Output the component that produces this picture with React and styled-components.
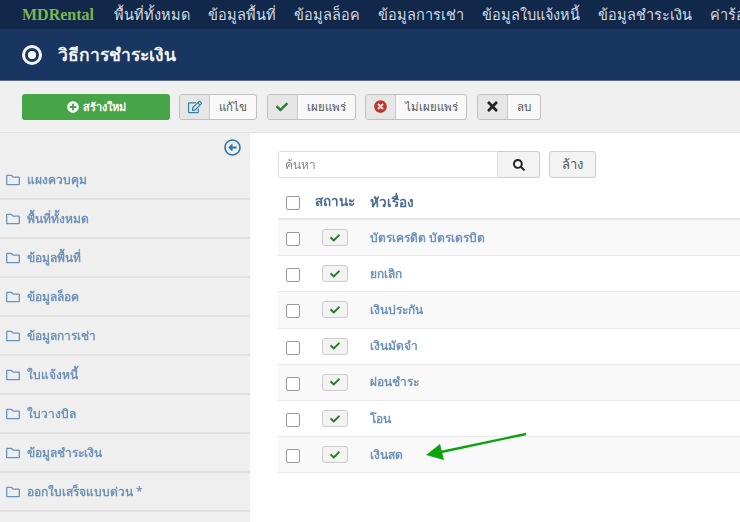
import React from "react";
import styled, { createGlobalStyle } from "styled-components";
import { FaCheck, FaTimes, FaTimesCircle, FaSearch, FaPlusCircle, FaRegEdit, FaRegFolder, FaRegArrowAltCircleLeft } from "react-icons/fa";

const GlobalStyle = createGlobalStyle`
  html, body {
    margin: 0;
    padding: 0;
    background: #fff;
    overflow: hidden;
  }
  body {
    font-family: "Noto Sans", "Open Sans", "Liberation Sans", sans-serif;
  }
`;

const navItems = ["พื้นที่ทั้งหมด", "ข้อมูลพื้นที่", "ข้อมูลล็อค", "ข้อมูลการเช่า", "ข้อมูลใบแจ้งหนี้", "ข้อมูลชำระเงิน", "ค่าร้อง"];
const sideItems = ["แผงควบคุม", "พื้นที่ทั้งหมด", "ข้อมูลพื้นที่", "ข้อมูลล็อค", "ข้อมูลการเช่า", "ใบแจ้งหนี้", "ใบวางบิล", "ข้อมูลชำระเงิน", "ออกใบเสร็จแบบด่วน *"];
const rows = ["บัตรเครดิต บัตรเดรบิต", "ยกเลิก", "เงินประกัน", "เงินมัดจำ", "ผ่อนชำระ", "โอน", "เงินสด"];

const App = () => {
  return (
    <Page>
      <GlobalStyle />
      <NavBar>
        <Brand>MDRental</Brand>
        {navItems.map(item => <NavItem key={item}>{item}</NavItem>)}
      </NavBar>
      <TitleBar>
        <TitleRing />
        <Title>วิธีการชำระเงิน</Title>
      </TitleBar>
      <Toolbar>
        <NewButton><FaPlusCircle size={12} /> สร้างใหม่</NewButton>
        <ToolButton $width={78}><ToolIcon $color="#2f7f9e"><FaRegEdit size={14} /></ToolIcon><ToolLabel>แก้ไข</ToolLabel></ToolButton>
        <ToolButton $width={89}><ToolIcon $color="#2f7a33"><FaCheck size={12} /></ToolIcon><ToolLabel>เผยแพร่</ToolLabel></ToolButton>
        <ToolButton $width={102}><ToolIcon $color="#bd362f"><FaTimesCircle size={13} /></ToolIcon><ToolLabel>ไม่เผยแพร่</ToolLabel></ToolButton>
        <ToolButton $width={64}><ToolIcon $color="#222"><FaTimes size={15} /></ToolIcon><ToolLabel>ลบ</ToolLabel></ToolButton>
      </Toolbar>
      <Body>
        <Sidebar>
          <Collapse><FaRegArrowAltCircleLeft size={17} /></Collapse>
          {sideItems.map(item => (
            <SideItem key={item}><FaRegFolder size={14} /><span>{item}</span></SideItem>
          ))}
        </Sidebar>
        <Main>
          <SearchRow>
            <SearchInput>ค้นหา</SearchInput>
            <SearchButton><FaSearch size={12} /></SearchButton>
            <ClearButton>ล้าง</ClearButton>
          </SearchRow>
          <Table>
            <HeadRow>
              <CheckCell><Check /></CheckCell>
              <StatusCell><HeadText>สถานะ</HeadText></StatusCell>
              <HeadTitle><HeadText>หัวเรื่อง</HeadText></HeadTitle>
            </HeadRow>
            {rows.map((row, i) => (
              <Row key={row} $odd={i % 2 === 0}>
                <CheckCell><Check /></CheckCell>
                <StatusCell><StatusButton><FaCheck size={10} /></StatusButton></StatusCell>
                <TitleCell><RowLink>{row}</RowLink></TitleCell>
              </Row>
            ))}
            <Arrow width="104" height="32" viewBox="0 0 104 32">
              <path d="M101 2 L16 20" stroke="#0ca30c" strokeWidth="2.4" fill="none" />
              <path d="M1 23 L15 12 L19 28 Z" fill="#0ca30c" />
            </Arrow>
          </Table>
        </Main>
      </Body>
    </Page>
  );
};
export default App;

const Page = styled.div`
  width: 740px;
  height: 522px;
  overflow: hidden;
  display: flex;
  flex-direction: column;
  filter: blur(0.4px);
`;

const NavBar = styled.div`
  height: 29px;
  background: #11284b;
  display: flex;
  align-items: center;
  padding-left: 22px;
  white-space: nowrap;
  overflow: hidden;
  flex-shrink: 0;
`;

const Brand = styled.div`
  font-family: "Liberation Serif", serif;
  font-weight: 700;
  font-size: 16px;
  color: #7db54e;
  width: 92px;
  flex-shrink: 0;
`;

const NavItem = styled.div`
  font-size: 14.5px;
  font-weight: 500;
  color: #d5dae2;
  margin-right: 18px;
  flex-shrink: 0;
`;

const TitleBar = styled.div`
  height: 52px;
  background: #183661;
  border-bottom: 1px solid #5a6f8f;
  display: flex;
  align-items: center;
  padding-left: 22px;
  gap: 15px;
  flex-shrink: 0;
  box-sizing: border-box;
`;

const TitleRing = styled.div`
  width: 20px;
  height: 20px;
  box-sizing: border-box;
  border: 3px solid #f4f6f8;
  border-radius: 50%;
  background: radial-gradient(circle, #f4f6f8 0 4px, #183661 4.5px);
`;

const Title = styled.div`
  font-size: 17.5px;
  font-weight: 600;
  color: #f2f4f7;
  margin-left: 1px;
`;

const Toolbar = styled.div`
  height: 52px;
  box-sizing: border-box;
  background: #f0f0f0;
  border-bottom: 1px solid #e3e3e3;
  display: flex;
  align-items: center;
  padding-left: 22px;
  gap: 9.5px;
  flex-shrink: 0;
`;

const NewButton = styled.div`
  width: 148px;
  height: 26px;
  margin-right: -0.5px;
  background: #46a546;
  border-radius: 3px;
  color: #fff;
  font-size: 11px;
  font-weight: 600;
  display: flex;
  align-items: center;
  justify-content: center;
  gap: 4px;
`;

const ToolButton = styled.div`
  width: ${props => props.$width}px;
  height: 26px;
  box-sizing: border-box;
  border: 1px solid #bfbfbf;
  border-radius: 3px;
  background: #f8f8f8;
  display: flex;
  overflow: hidden;
`;

const ToolIcon = styled.div`
  width: 29px;
  background: #e6e6e6;
  border-right: 1px solid #c8c8c8;
  color: ${props => props.$color};
  display: flex;
  align-items: center;
  justify-content: center;
  flex-shrink: 0;
`;

const ToolLabel = styled.div`
  flex: 1;
  font-size: 11.5px;
  font-weight: 500;
  color: #555;
  display: flex;
  align-items: center;
  justify-content: center;
`;

const Body = styled.div`
  flex: 1;
  display: flex;
  min-height: 0;
`;

const Sidebar = styled.div`
  width: 250px;
  background: #efefef;
  flex-shrink: 0;
  position: relative;
  padding-top: 28px;
  box-sizing: border-box;
`;

const Collapse = styled.div`
  position: absolute;
  top: 6px;
  left: 224px;
  color: #2f74b0;
  line-height: 0;
`;

const SideItem = styled.div`
  height: 39px;
  box-sizing: border-box;
  border-bottom: 2px solid #e1e1e1;
  display: flex;
  align-items: center;
  gap: 7px;
  padding-left: 6px;
  color: #6a93bd;
  font-size: 12px;
  font-weight: 600;
  span {
    color: #6f93ba;
  }
`;

const Main = styled.div`
  flex: 1;
  min-width: 0;
  padding: 18px 0 0 28px;
`;

const SearchRow = styled.div`
  display: flex;
  align-items: stretch;
  height: 27px;
`;

const SearchInput = styled.div`
  width: 220px;
  box-sizing: border-box;
  border: 1px solid #ddd;
  border-radius: 3px 0 0 3px;
  font-size: 12px;
  color: #888;
  display: flex;
  align-items: center;
  padding-left: 6px;
`;

const SearchButton = styled.div`
  width: 42px;
  box-sizing: border-box;
  background: #f3f3f3;
  border: 1px solid #ccc;
  border-left: none;
  border-radius: 0 3px 3px 0;
  color: #222;
  display: flex;
  align-items: center;
  justify-content: center;
`;

const ClearButton = styled.div`
  width: 47px;
  margin-left: 9px;
  box-sizing: border-box;
  background: #f3f3f3;
  border: 1px solid #ccc;
  border-radius: 3px;
  color: #555;
  font-size: 13px;
  display: flex;
  align-items: center;
  justify-content: center;
`;

const Table = styled.div`
  margin-top: 6px;
  position: relative;
`;

const HeadRow = styled.div`
  height: 36px;
  display: flex;
  align-items: center;
  border-bottom: 2px solid #e8e8e8;
  box-sizing: border-box;
`;

const HeadText = styled.span`
  font-size: 13.5px;
  font-weight: 600;
  color: #4a6d94;
`;

const Row = styled.div`
  height: 36.2px;
  box-sizing: border-box;
  display: flex;
  align-items: center;
  background: ${props => (props.$odd ? "#f9f9f9" : "#fff")};
  border-bottom: 1px solid #e8e8e8;
`;

const CheckCell = styled.div`
  width: 37px;
  padding: 3px 0 0 8px;
  box-sizing: border-box;
  display: flex;
  flex-shrink: 0;
`;

const Check = styled.div`
  width: 12px;
  height: 12px;
  border: 1px solid #999;
  border-radius: 2px;
  background: #fff;
`;

const StatusCell = styled.div`
  width: 55px;
  display: flex;
  flex-shrink: 0;
`;

const HeadTitle = styled.div`
  flex: 1;
`;

const TitleCell = styled.div`
  flex: 1;
  padding-bottom: 4px;
`;

const RowLink = styled.span`
  font-size: 12px;
  font-weight: 600;
  color: #6f93ba;
`;

const StatusButton = styled.div`
  width: 26px;
  height: 17px;
  box-sizing: border-box;
  border: 1px solid #ccc;
  border-radius: 3px;
  background: #f3f3f3;
  color: #2f7a33;
  display: flex;
  align-items: center;
  justify-content: center;
  margin-left: 7px;
`;

const Arrow = styled.svg`
  position: absolute;
  left: 147px;
  top: 248px;
`;
